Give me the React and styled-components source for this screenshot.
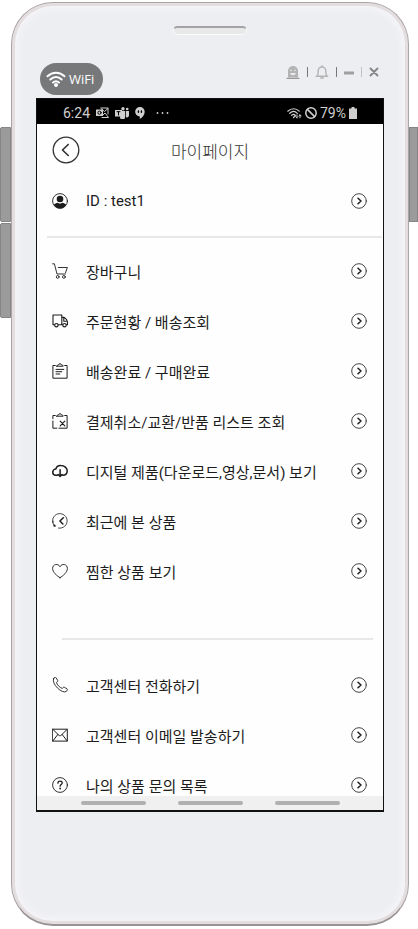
import React from 'react'
import styled, { createGlobalStyle } from 'styled-components';

const GlobalStyle = createGlobalStyle`
    *{
        box-sizing: border-box;
    }
    body{
        margin: 0;
        background: #fff;
        font-family: Roboto, "Noto Sans CJK KR", sans-serif;
    }
    h1, ul{
        margin: 0;
        padding: 0;
    }
    button{
        display: flex;
        padding: 0;
        border: none;
        background: transparent;
        color: inherit;
        cursor: pointer;
    }
    svg{
        display: block;
        flex: none;
    }
`;

function Icon({ size = 16, width, line = 1, children }) {
    return (
        <svg
            width={width || size}
            height={size}
            viewBox={`0 0 ${width || size} ${size}`}
            fill="none"
            stroke="currentColor"
            strokeWidth={line}
            strokeLinecap="round"
            strokeLinejoin="round"
            aria-hidden="true"
        >
            {children}
        </svg>
    )
}

const icons = {
    user: (
        <Icon>
            <circle cx="8" cy="8" r="7.4" strokeWidth="0.9" />
            <circle cx="8" cy="6" r="3.3" fill="currentColor" stroke="none" />
            <path d="M1.800 12c1-1.400 2.400-1.900 3.900-2.200 1.300 1.100 3.300 1.100 4.600 0 1.500.3 2.900.8 3.900 2.200A7.400 7.400 0 0 1 1.800 12z" fill="currentColor" stroke="none" />
        </Icon>
    ),
    cart: (
        <Icon line={0.9}>
            <path d="M.6.8h1.800L5 11h8.500M6.300 4.500h9.100l-1.900 5.200" />
            <circle cx="5.700" cy="13.900" r="1.400" />
            <circle cx="11.900" cy="13.900" r="1.400" />
        </Icon>
    ),
    truck: (
        <Icon line={1.1}>
            <path d="M2.600 11.700H1V2h8.800v9.700H6.200M9.800 4.400h2.500c1.900.9 3 2.700 3.200 4.800v2.500h-1.200M10.700 11.700h-.9M11.800 4.800v3.400h3.300" />
            <circle cx="4.400" cy="12.200" r="1.700" />
            <circle cx="12.500" cy="12.200" r="1.700" />
        </Icon>
    ),
    done: (
        <Icon>
            <path d="M3.300 2.500H.9v12.700h14.200V2.500h-2.400M4.800 3.200h6.400c-.2-1.100-.9-1.300-1.800-1.400C9.200.3 6.800.3 6.600 1.800c-.9.1-1.600.300-1.800 1.400zM4 6.400h7.800M4 8.700h5.800M4 11h3.800" />
        </Icon>
    ),
    cancel: (
        <Icon>
            <path d="M3.300 2.500H.9v3.200M.9 8v7.200h4M7 15.200h8.100V2.500h-2.400M4.800 3.200h6.400c-.2-1.100-.9-1.300-1.800-1.400C9.200.3 6.800.3 6.600 1.800c-.9.1-1.600.300-1.800 1.400z" />
            <path d="M8.200 8.200l4.600 4.600M12.800 8.200l-4.600 4.600" strokeWidth="1.200" />
        </Icon>
    ),
    cloud: (
        <Icon line={1.5}>
            <path d="M5.400 12.300H3.900A3.100 3.100 0 0 1 3.800 6.100C4.400 3.800 6.300 2.400 8.800 2.500c3.700 0 6.400 2.500 6.400 5.300 0 2.600-1.800 4.500-4.500 4.500M8.100 6.800v6.300M6.200 11.500l1.900 2 1.900-2" />
        </Icon>
    ),
    recent: (
        <Icon line={0.8}>
            <path d="M3 13.400A7.300 7.300 0 1 1 6.500 15.100M1 9.600V8" />
            <path d="M11.300 4.800L7.900 8l3 3" strokeWidth="1.500" />
            <circle cx="2.500" cy="12.700" r="1.100" fill="currentColor" stroke="none" />
        </Icon>
    ),
    heart: (
        <Icon line={0.9}>
            <path d="M8 14.700C4.700 12.700.6 9.200.6 5.400.6 1.200 6.200-.1 8 3.800c1.800-3.900 7.400-2.600 7.400 1.600 0 3.800-4.100 7.300-7.400 9.300z" />
        </Icon>
    ),
    phone: (
        <Icon line={0.9}>
            <path d="M1.700 1.300l1.100-.8c.5-.3 1-.1 1.300.300l1.600 2.600c.3.500.1 1-.300 1.300l-.9.700c.2 2.100 3.600 5.700 5.900 6l.8-.9c.3-.4.800-.5 1.300-.2l2.500 1.600c.5.300.5.800.2 1.300l-.8 1.200C10.200 17.400-1.300 6.600 1.700 1.300z" />
        </Icon>
    ),
    mail: (
        <Icon>
            <path d="M.7 2.200h14.600v11.900H.7zM.9 2.400L6.800 8.200c.8.700 1.600.7 2.400 0L15.100 2.400M.9 13.900l5-6.500M15.100 13.900l-5-6.500" />
        </Icon>
    ),
    help: (
        <Icon line={0.9}>
            <circle cx="8" cy="8" r="7.400" />
            <path d="M5.900 6.200C5.900 3.300 10.300 3.500 10.200 6c0 1.500-2.100 1.600-2.100 3.200" strokeWidth="1.300" />
            <circle cx="8.100" cy="11.500" r="0.900" fill="currentColor" stroke="none" />
        </Icon>
    ),
};

const orderMenu = [
    { icon: 'cart', label: '장바구니' },
    { icon: 'truck', label: '주문현황 / 배송조회' },
    { icon: 'done', label: '배송완료 / 구매완료' },
    { icon: 'cancel', label: '결제취소/교환/반품 리스트 조회' },
    { icon: 'cloud', label: '디지털 제품(다운로드,영상,문서) 보기' },
    { icon: 'recent', label: '최근에 본 상품' },
    { icon: 'heart', label: '찜한 상품 보기' },
];

const supportMenu = [
    { icon: 'phone', label: '고객센터 전화하기' },
    { icon: 'mail', label: '고객센터 이메일 발송하기' },
    { icon: 'help', label: '나의 상품 문의 목록' },
];

function MenuItem({ icon, label }) {
    return (
        <li>
            <MenuLink href="#">
                {icons[icon]}
                <span>{label}</span>
                <Icon>
                    <circle cx="8" cy="8" r="7.300" stroke="#444" />
                    <path d="M7 5.200L10 8l-3 2.800" strokeWidth="1.500" />
                </Icon>
            </MenuLink>
        </li>
    )
}

function WindowTools() {
    return (
        <ToolsStyled>
            <button aria-label="Profile">
                <Icon size={14} line={1.2}>
                    <path d="M1 13.300h12" stroke="#999" />
                    <path d="M2 12.500V6a5 5 0 0 1 10 0v6.500z" fill="currentColor" stroke="none" />
                    <path d="M4.200 8c.6 3 5 3 5.600 0z" fill="#edeef2" stroke="none" />
                    <path d="M5 5.200v.4M9 5.200v.4" stroke="#edeef2" strokeWidth="1.400" />
                </Icon>
            </button>
            <ToolLine />
            <button aria-label="Notifications">
                <Icon size={14} line={1.4}>
                    <path d="M1.300 11.200h11.400M2.300 11c1-1.500.9-3 .9-5.200a3.800 3.800 0 0 1 7.600 0c0 2.200-.1 3.700.9 5.200M5.800 13h2.400M7 .8v1" />
                </Icon>
            </button>
            <ToolLine />
            <button aria-label="Minimize">
                <Icon size={14} width={10} line={3}>
                    <path d="M0 8h10" stroke="#a0a0a0" strokeLinecap="butt" />
                </Icon>
            </button>
            <ToolLine $light />
            <button aria-label="Close">
                <Icon size={14} width={10} line={2}>
                    <path d="M1.500 3.500l7 7M8.500 3.500l-7 7" stroke="#888" />
                </Icon>
            </button>
        </ToolsStyled>
    )
}

function StatusBar() {
    return (
        <StatusStyled>
            <span>6:24</span>
            <Icon size={12} width={13}>
                <path d="M5 1h7v6M5 1.500l3.500 3 3.500-3M7 8l2-2 3.500 4.500H6" />
                <path d="M0 2.500h7v6.500H0z" fill="currentColor" stroke="none" />
                <circle cx="3.500" cy="5.700" r="1.600" stroke="#000" />
            </Icon>
            <Icon size={12} width={14}>
                <path d="M0 3h7v6.500H0zM6 4h4v5.500a2.500 2.500 0 0 1-5 1zM10.800 4H14v4.500a2 2 0 0 1-3.200 1.500z" fill="currentColor" stroke="none" />
                <circle cx="8" cy="1.700" r="1.700" fill="currentColor" stroke="none" />
                <circle cx="12.200" cy="2" r="1.300" fill="currentColor" stroke="none" />
                <path d="M2 4.700h3M3.500 4.700V8" stroke="#000" />
            </Icon>
            <Icon size={12} width={10}>
                <path d="M5 0a4.700 4.700 0 0 1 4.700 4.700C9.700 8 7.500 10.500 4.800 12V9.400A4.700 4.700 0 0 1 5 0z" fill="currentColor" stroke="none" />
                <path d="M3.400 4v1.200M6.400 4v1.200" stroke="#000" strokeWidth="1.400" />
            </Icon>
            <StatusMore>
                <circle cx="1.500" cy="6" r="0.900" />
                <circle cx="6.500" cy="6" r="0.900" />
                <circle cx="11.500" cy="6" r="0.900" />
            </StatusMore>
            <StatusRight>
                <Icon size={12} width={15} line={1.2}>
                    <path d="M.8 4.200c3.500-3.300 8.300-3.300 11.400 0M2.700 6.300c2.400-2.200 5.400-2.200 7.600 0M4.600 8.400c1.300-1.200 2.600-1.200 3.800 0M6.500 10.500L8 9" />
                    <path d="M10 7.800v3M8.800 9.700l1.200 1.200M13 10.800v-3M11.800 9l1.200-1.200L14.200 9" strokeWidth="1" />
                </Icon>
                <Icon size={12} line={1.5}>
                    <circle cx="6" cy="6" r="5.200" />
                    <path d="M2.400 2.400l7.200 7.200" />
                </Icon>
                <span>79%</span>
                <Icon size={12} width={8}>
                    <path d="M0 1.500h2.500V0h3v1.500H8V12H0z" fill="currentColor" stroke="none" />
                </Icon>
            </StatusRight>
        </StatusStyled>
    )
}

function App() {
    return (
        <>
            <GlobalStyle />
            <Stage>
                <SideKeys>
                    <SideKey />
                    <SideKey />
                </SideKeys>
                <Phone>
                    <Speaker />
                    <TopTools>
                        <WifiBadge>
                            <Icon size={16} width={20} line={2}>
                                <path d="M1.500 5.300c5-4.700 12-4.700 17 0M4.300 8.500c3.500-3.200 7.900-3.200 11.400 0M7 11.500c2-1.700 4-1.700 6 0" />
                                <circle cx="10" cy="14" r="2" fill="currentColor" stroke="none" />
                            </Icon>
                            <span>WiFi</span>
                        </WifiBadge>
                        <WindowTools />
                    </TopTools>
                    <Screen>
                        <StatusBar />
                        <Content>
                            <PageHeader>
                                <button aria-label="Back">
                                    <Icon size={28} line={1.3}>
                                        <circle cx="14" cy="14" r="12.800" />
                                        <path d="M16.200 8.500L10.500 14l5.700 5.500" strokeWidth="1.700" />
                                    </Icon>
                                </button>
                                <h1>마이페이지</h1>
                            </PageHeader>
                            <MenuList>
                                <MenuItem icon="user" label="ID : test1" />
                            </MenuList>
                            <Divider />
                            <MenuList>
                                {orderMenu.map((item) => <MenuItem key={item.icon} {...item} />)}
                            </MenuList>
                            <Divider $inset />
                            <MenuList>
                                {supportMenu.map((item) => <MenuItem key={item.icon} {...item} />)}
                            </MenuList>
                        </Content>
                        <NavBar>
                            <button aria-label="Recent apps" />
                            <button aria-label="Home" />
                            <button aria-label="Back to previous app" />
                        </NavBar>
                    </Screen>
                </Phone>
                <SideKeys $right>
                    <SideKey $right />
                </SideKeys>
            </Stage>
        </>
    )
}

const Stage = styled.div`
    display: flex;
    height: 100vh;
    padding: 2px 0 3px;
    overflow: hidden;
`;

const SideKeys = styled.div`
    display: flex;
    flex-direction: column;
    flex: none;
    gap: 1px;
    width: ${({ $right }) => ($right ? '9px' : '11px')};
    padding-top: 125px;
`;

const SideKey = styled.div`
    height: 95px;
    border: 1px solid #858585;
    background: #9b9b9b;
    border-radius: ${({ $right }) => ($right ? '0' : '2px 0 0 2px')};
`;

const Phone = styled.div`
    display: flex;
    flex-direction: column;
    flex: 1;
    min-width: 0;
    padding: 23px 24px 112px;
    border: 1px solid #aaa5a5;
    border-bottom: 2px solid #989393;
    border-radius: 42px;
    background: #edeef2;
    box-shadow: inset 0 0 0 3px #e4dddf, inset 0 0 6px 6px #f5f5f8;
`;

const Speaker = styled.div`
    align-self: center;
    width: 74px;
    height: 9px;
    border: 1px solid #fafafa;
    border-top: 2px solid #a3a3a3;
    border-radius: 5px;
    background: #e9e9e9;
`;

const TopTools = styled.div`
    display: flex;
    align-items: flex-start;
    justify-content: space-between;
    padding: 28px 4px 3px;
`;

const WifiBadge = styled.div`
    display: flex;
    align-items: center;
    gap: 3px;
    height: 32px;
    padding: 0 9px 0 6px;
    border-radius: 16px;
    background: #77787a;
    color: #fff;
    font: 13px "Open Sans", sans-serif;
`;

const ToolsStyled = styled.div`
    display: flex;
    align-items: center;
    gap: 7px;
    padding: 2px 1px 0 0;
    color: #b3b3b3;
`;

const ToolLine = styled.span`
    width: 1px;
    height: 10px;
    background: ${({ $light }) => ($light ? '#c4c4c6' : '#77787a')};
`;

const Screen = styled.div`
    display: flex;
    flex-direction: column;
    flex: 1;
    min-height: 0;
    border: 1px solid #111;
    border-bottom-width: 2px;
    background: #fefefe;
`;

const StatusStyled = styled.div`
    display: flex;
    align-items: center;
    flex: none;
    gap: 6px;
    height: 25px;
    padding: 2px 26px 0 26px;
    background: #000;
    color: #cfcfcf;
    font-size: 14px;
`;

const StatusMore = styled.svg`
    width: 13px;
    height: 12px;
    margin-left: 5px;
    fill: currentColor;
`;

const StatusRight = styled.div`
    display: flex;
    align-items: center;
    gap: 3px;
    margin-left: auto;
`;

const Content = styled.main`
    flex: 1;
    min-height: 0;
    overflow: hidden;
`;

const PageHeader = styled.header`
    display: grid;
    grid-template-columns: 28px 1fr 28px;
    align-items: center;
    height: 52px;
    padding: 0 15px;
    color: #333;
    h1{
        font-size: 17px;
        font-weight: 300;
        text-align: center;
    }
`;

const MenuList = styled.ul`
    list-style: none;
`;

const MenuLink = styled.a`
    display: flex;
    align-items: center;
    gap: 18px;
    height: 50px;
    padding: 0 16px 0 15px;
    color: #1c1c1c;
    font-size: 15px;
    text-decoration: none;
    white-space: nowrap;
    span{
        flex: 1;
    }
`;

const Divider = styled.hr`
    height: 2px;
    margin: ${({ $inset }) => ($inset ? '42px 10px 20px 25px' : '10px 1px 8px 10px')};
    border: none;
    background: #e8e8e8;
`;

const NavBar = styled.nav`
    display: flex;
    align-items: center;
    justify-content: center;
    flex: none;
    gap: 32px;
    height: 14px;
    background: #f0f0f0;
    button{
        width: 65px;
        height: 4px;
        border-radius: 2px;
        background: #b0b0b0;
    }
`;

export default App;
